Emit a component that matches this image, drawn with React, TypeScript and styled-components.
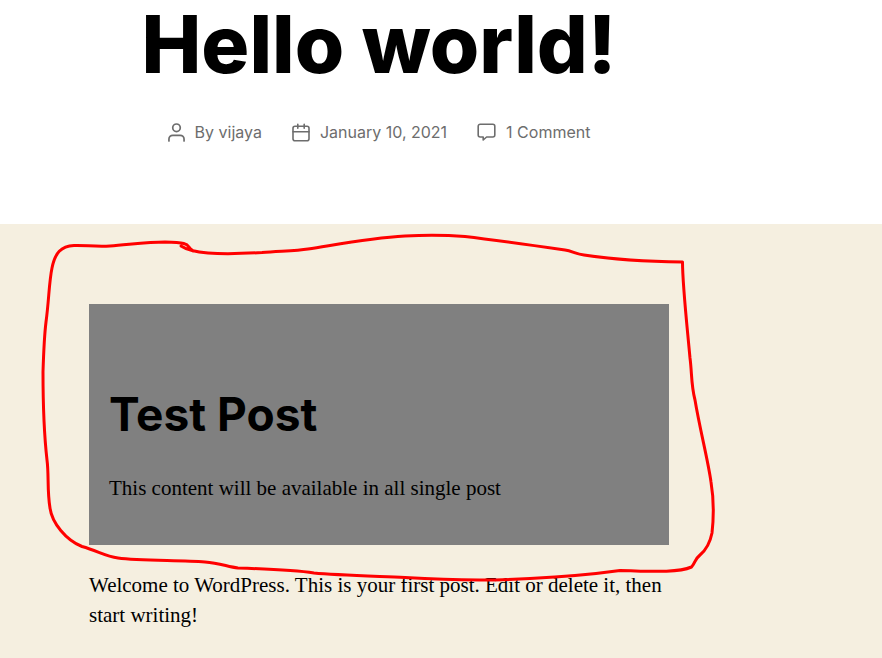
import React from "react";
import styled, { createGlobalStyle } from "styled-components";

const GlobalStyle = createGlobalStyle`
  *, *::before, *::after { box-sizing: border-box; }
  body {
    margin: 0;
    background: #ffffff;
    color: #000000;
    font-family: Inter, "Liberation Sans", sans-serif;
  }
  h1, h2, p, ul { margin: 0; padding: 0; }
`;

const Article = styled.article`
  position: relative;
  min-height: 100vh;
  display: flex;
  flex-direction: column;
`;

const Header = styled.header`
  display: flex;
  flex-direction: column;
  align-items: center;
  gap: 32px;
  padding: 0 124px 80px 0;
`;

const Title = styled.h1`
  font-size: 80px;
  font-weight: 800;
  line-height: 88px;
  text-align: center;
`;

const MetaList = styled.ul`
  display: flex;
  flex-wrap: wrap;
  justify-content: center;
  gap: 0 30px;
  list-style: none;
`;

const MetaItem = styled.li`
  display: flex;
  align-items: center;
  gap: 10px;
  color: #6d6d6d;
  font-size: 16px;
  font-weight: 400;
  line-height: 24px;
  white-space: nowrap;
`;

const MetaLink = styled.a`
  color: inherit;
  text-decoration: none;
`;

const Icon = styled.svg`
  flex: none;
  fill: none;
  stroke: currentColor;
  stroke-linecap: round;
  stroke-linejoin: round;
`;

const Content = styled.div`
  flex: 1;
  background: #f5efe0;
  padding: 80px 124px 28px 0;
`;

const Column = styled.div`
  display: flex;
  flex-direction: column;
  gap: 25px;
  width: 100%;
  max-width: 580px;
  margin: 0 auto;
`;

const Notice = styled.section`
  display: flex;
  flex-direction: column;
  gap: 29px;
  padding: 80px 20px 42px;
  background: #808080;
`;

const NoticeTitle = styled.h2`
  font-size: 46px;
  font-weight: 700;
  line-height: 60px;
`;

const Text = styled.p`
  font-family: "Liberation Serif", "Times New Roman", serif;
  font-size: 21px;
  line-height: 30px;
`;

const Scribble = styled.svg`
  position: absolute;
  top: 0;
  left: 0;
  pointer-events: none;
  fill: none;
  stroke: #ff0000;
  stroke-width: 3;
  stroke-linecap: round;
  stroke-linejoin: round;
`;

const UserIcon = () => (
  <Icon width="17" height="19" viewBox="0 0 18 20" strokeWidth="1.8" aria-hidden="true">
    <circle cx="9" cy="5" r="4" />
    <path d="M1 19v-2a4 4 0 0 1 4-4h8a4 4 0 0 1 4 4v2" />
  </Icon>
);

const CalendarIcon = () => (
  <Icon width="18" height="19" viewBox="0 0 18 19" strokeWidth="1.6" aria-hidden="true">
    <rect x="1" y="3.2" width="16" height="14.6" rx="2" />
    <path d="M1 8.7h16M5.800 1.200v4M12.200 1.200v4" />
  </Icon>
);

const CommentIcon = () => (
  <Icon width="19" height="19" viewBox="0 0 19 19" strokeWidth="1.6" aria-hidden="true">
    <path d="M3.200 1.200h12.600a2 2 0 0 1 2 2v8.800a2 2 0 0 1-2 2H9.600l-3.400 3v-3h-3a2 2 0 0 1-2-2V3.200a2 2 0 0 1 2-2z" />
  </Icon>
);

export default function App() {
  return (
    <>
      <GlobalStyle />
      <Article>
        <Header>
          <Title>Hello world!</Title>
          <MetaList>
            <MetaItem>
              <UserIcon />
              <span>
                By <MetaLink href="#author">vijaya</MetaLink>
              </span>
            </MetaItem>
            <MetaItem>
              <CalendarIcon />
              <MetaLink href="#date">January 10, 2021</MetaLink>
            </MetaItem>
            <MetaItem>
              <CommentIcon />
              <MetaLink href="#comments">1 Comment</MetaLink>
            </MetaItem>
          </MetaList>
        </Header>
        <Content>
          <Column>
            <Notice>
              <NoticeTitle>Test Post</NoticeTitle>
              <Text>This content will be available in all single post</Text>
            </Notice>
            <Text>
              Welcome to WordPress. This is your first post. Edit or delete it, then start writing!
            </Text>
          </Column>
        </Content>
        <Scribble width="720" height="600" viewBox="0 0 720 600" aria-hidden="true">
          <path d="M181 246C187 250 196 252 208 253C222 254 245 253.500 262 252.500C280 251 296 251 308 249C340 244 370 238 405 236C425 235 445 235 465 236.500C495 240 530 245 565 250C572 251 576 254 584 255C610 259 645 261.500 682.500 262C682.500 285 687 325 690 358C692 373 691 385 695 400C700 430 708 460 711 482C714 500 714 515 712 533C710 543 706 550 700 555C694 560 696 562 691.500 567C680 572 660 572 620 570.500C595 574 560 577 530 578.500C490 581 445 580 405 577.500C370 576 335 575 314 573C295 570 270 569 238 568C228 567 220 563 205 562C180 560 140 561 118 558C105 556 98 551 82 546.500C66 540 52 523 50 508C47 490 49 475 47 460C43 425 43 400 43 372C44 340 45 330 46 322C49 300 49 282 52 268C55 253 61 246 74 245.500C85 245 95 247 110 246C130 244.500 148 242 165 242C185 242.500 187 244 189 247C190 249 192 250 193 251" />
        </Scribble>
      </Article>
    </>
  );
}
